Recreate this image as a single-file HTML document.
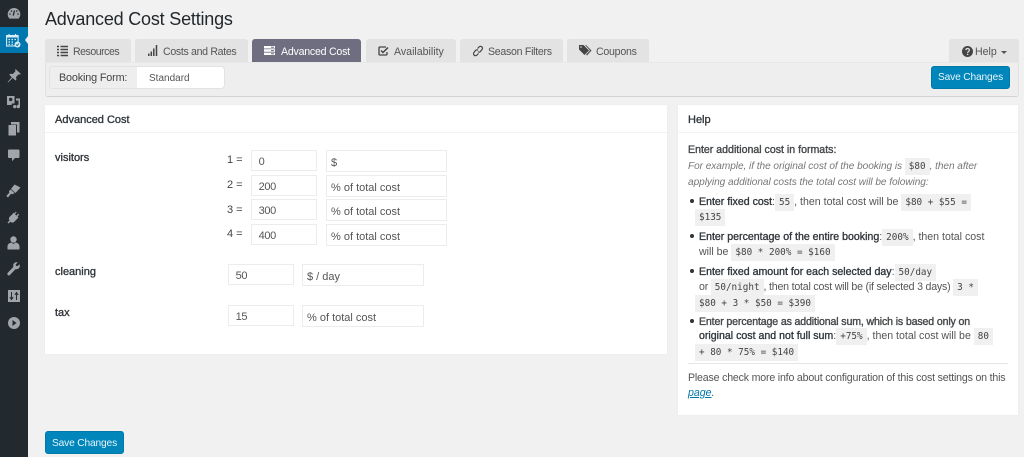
<!DOCTYPE html>
<html><head><meta charset="utf-8"><style>
html,body{margin:0;padding:0;width:1024px;height:457px;overflow:hidden;background:#f1f1f1;font-family:"Liberation Sans",sans-serif;color:#555;font-size:11px}
.a{position:absolute}
.t{position:absolute;white-space:nowrap;line-height:16px}
#side{left:0;top:0;width:28px;height:457px;background:#22292f}
#act{left:0;top:27px;width:28px;height:26px;background:#0077ae}
#arr{left:25px;top:36px;width:0;height:0;border:4px solid transparent;border-left:0;border-right:3px solid #f1f1f1}
svg{position:absolute;overflow:visible}
.tab{position:absolute;top:39px;height:23px;background:#e3e3e3;border-radius:3px 3px 0 0;box-sizing:border-box;line-height:26px;color:#555;font-size:10.6px;white-space:nowrap}
.tab span{position:absolute;top:0}
.tab.on{background:#6e6e80;color:#fff}
.panel{position:absolute;background:#fff;box-shadow:0 0 1px rgba(0,0,0,.06)}
.btn{position:absolute;background:#0086bb;color:#e8f5fa;border-radius:3px;text-align:center;font-size:10.2px;letter-spacing:-.15px;box-sizing:border-box;border:1px solid #0079a8}
.i{position:absolute;background:#fff;border:1px solid #ececec;box-sizing:border-box;height:21px;line-height:22px;padding-left:4px;font-size:11px;color:#555}
.n{letter-spacing:-.4px}
.s{height:22px;line-height:24px;padding-left:4px}
.l{position:absolute;font-size:11px;line-height:16px;color:#444;white-space:nowrap}
.b{color:#32373c;font-weight:normal;-webkit-text-stroke:.35px #32373c}
code{font-family:"DejaVu Sans Mono",monospace;font-size:9.3px;background:#f0f0f0;padding:3px 4px;color:#444;-webkit-text-stroke:0;letter-spacing:0}
.h{font-size:10.6px;color:#555;line-height:18px}
.it{font-size:10.1px;font-style:italic;color:#777;letter-spacing:-.05px}
.bu{position:absolute;left:690px;width:4px;height:4px;border-radius:50%;background:#333}
</style></head><body>
<div class="a" id="side"></div>
<div class="a" id="act"></div>
<div class="a" id="arr"></div>

<svg style="left:7px;top:7px" width="14" height="13" viewBox="0 0 14 13"><path d="M7 1a6.300 6.300 0 0 0-6.300 6.300c0 1.700.6 3.200 1.700 4.300h9.200a6.300 6.300 0 0 0 1.700-4.300A6.300 6.300 0 0 0 7 1z" fill="#a0a5a9"/><path d="M7.500 3.500L6.200 8.600" stroke="#22292f" stroke-width="1.300"/><circle cx="3" cy="7" r=".8" fill="#22292f"/><circle cx="11" cy="7" r=".8" fill="#22292f"/><circle cx="4.500" cy="4" r=".8" fill="#22292f"/><circle cx="9.800" cy="4" r=".8" fill="#22292f"/></svg>
<svg style="left:6px;top:34px" width="15" height="14" viewBox="0 0 15 14"><rect x=".6" y="1.500" width="11.500" height="10.500" fill="none" stroke="#d8ecf4" stroke-width="1.100"/><rect x=".6" y="1" width="11.500" height="2.500" fill="#d8ecf4"/><path d="M3 0v2M9.500 0v2" stroke="#d8ecf4" stroke-width="1.200"/><path d="M2.500 5.500h1.500M5.500 5.500H7M8.500 5.500H10M2.500 8h1.500M5.500 8H7M2.500 10.300h1.500M5.500 10.300H7" stroke="#d8ecf4" stroke-width="1.200"/><circle cx="11.500" cy="10.500" r="3" fill="#d8ecf4"/><path d="M10 10.500l1.200 1.100 1.800-2" stroke="#0077ae" fill="none"/></svg>
<svg style="left:7px;top:69px" width="14" height="14" viewBox="0 0 14 14"><path d="M8.500 0l5.500 5-1.200.5-1-.3-2.700 2.700.3 2.600-1 1-2.600-2.600L1 13.500l-.4-.4 4.200-4.900-2.500-2.500 1-1 2.500.3L8.500 2.300 8.100 1.200z" fill="#a0a5a9"/></svg>
<svg style="left:6px;top:95px" width="15" height="14" viewBox="0 0 15 14"><path d="M1 1h7.500v7.500H5.800L5.500 10H1z" fill="#a0a5a9"/><circle cx="4.700" cy="4.500" r="1.700" fill="#22292f"/><path d="M10 3.500h4v8a1.700 1.700 0 1 1-1.500-1.700V5.500H10zM8.700 10a1.600 1.600 0 1 1 0 3.200 1.600 1.600 0 0 1 0-3.200z" fill="#a0a5a9"/></svg>
<svg style="left:8px;top:122px" width="12" height="14" viewBox="0 0 12 14"><path d="M3 0h8.500v10.500H9V2.500H3z" fill="#a0a5a9"/><rect x=".5" y="3" width="7.500" height="10.500" fill="#a0a5a9"/></svg>
<svg style="left:8px;top:149px" width="12" height="13" viewBox="0 0 12 13"><path d="M1 .5h9.500a1 1 0 0 1 1 1v6.500a1 1 0 0 1-1 1H7l-3 3.300V9H1a1 1 0 0 1-1-1V1.500a1 1 0 0 1 1-1z" fill="#a0a5a9"/></svg>
<svg style="left:6px;top:184px" width="15" height="14" viewBox="0 0 15 14"><path d="M8.500 .5l6 3-5 5.500-4.500-4zM4.500 5.500l4 3.500-2 1.300-1.500-.6-3 3.800-1.700-1.500 3-3.200-.3-1.500z" fill="#a0a5a9"/></svg>
<svg style="left:7px;top:211px" width="13" height="13" viewBox="0 0 13 13"><path d="M8.500 .5l1.200.8-1.700 2 1.500 1.300 1.700-2 1 .9-1.700 2.100 1 .9-4.700 4.700c-1.500.7-2.600.3-3.500-.5L1.500 12.500.5 11.500l2-2c-.7-1-.8-2.100-.2-3.300L7 1.500l1 .9z" fill="#a0a5a9"/></svg>
<svg style="left:7px;top:236px" width="13" height="14" viewBox="0 0 13 14"><circle cx="6.500" cy="3.500" r="3.200" fill="#a0a5a9"/><path d="M4.500 6.500L6.500 8l2-1.500c2.500.5 4 1.700 4 4v3H.5v-3c0-2.300 1.500-3.500 4-4z" fill="#a0a5a9"/></svg>
<svg style="left:7px;top:262px" width="13" height="14" viewBox="0 0 13 14"><path d="M12.500 2.200L10.300 4.300 9 3.800l-.4-1.300L10.800.5C9.400 0 7.900.3 7 1.400 6.100 2.400 6 3.700 6.400 4.900L.8 10.800c-.6.700-.6 1.600 0 2.200.6.600 1.500.600 2.100 0l5.700-5.900c1.200.3 2.500 0 3.400-1 .9-1 1.100-2.600.5-3.900z" fill="#a0a5a9"/></svg>
<svg style="left:8px;top:290px" width="12" height="12" viewBox="0 0 12 12"><rect width="12" height="12" fill="#a0a5a9"/><path d="M3.500 2v7M1.800 7l1.700 2.500L5.200 7M8.500 10V3M6.800 5l1.700-2.500L10.200 5" stroke="#22292f" stroke-width="1" fill="none"/></svg>
<svg style="left:8px;top:317px" width="12" height="12" viewBox="0 0 12 12"><circle cx="6" cy="6" r="6" fill="#a0a5a9"/><path d="M4.500 3l4 3-4 3z" fill="#22292f"/></svg>

<div class="t" style="left:45px;top:7px;font-size:18px;line-height:24px;color:#23282d;letter-spacing:-.2px">Advanced Cost Settings</div>

<div class="tab" style="left:45px;width:86px"><svg style="left:12px;top:7px" width="11" height="10" viewBox="0 0 11 10"><path d="M0 .5h2M3.500 .5H11M0 3.500h2M3.500 3.500H11M0 6.500h2M3.500 6.500H11M0 9.500h2M3.500 9.500H11" stroke="#444" stroke-width="1.500"/></svg><span style="left:28px;letter-spacing:-.5px">Resources</span></div>
<div class="tab" style="left:135px;width:113px"><svg style="left:13px;top:6px" width="10" height="11" viewBox="0 0 10 11"><path d="M.8 8.500V11M3.300 6.500V11M5.800 3.500V11M8.500 0V11" stroke="#444" stroke-width="1.500"/></svg><span style="left:28px;letter-spacing:-.33px">Costs and Rates</span></div>
<div class="tab on" style="left:252px;width:109px"><svg style="left:12px;top:7px" width="11" height="9" viewBox="0 0 11 9"><path d="M0 0h11v2.500H0zM0 3.300h11v2.500H0zM0 6.600h11V9H0z" fill="#fff"/><path d="M7 1.300h3M7 4.600h3M7 7.800h3" stroke="#6e6e80"/></svg><span style="left:29px;letter-spacing:-.23px">Advanced Cost</span></div>
<div class="tab" style="left:366px;width:90px"><svg style="left:12px;top:7px" width="11" height="10" viewBox="0 0 11 10"><path d="M8 1H2a1 1 0 0 0-1 1v6a1 1 0 0 0 1 1h6a1 1 0 0 0 1-1V6" fill="none" stroke="#444" stroke-width="1.300"/><path d="M3 4.500l2 2 5-5" fill="none" stroke="#444" stroke-width="1.500"/></svg><span style="left:28px">Availability</span></div>
<div class="tab" style="left:460px;width:103px"><svg style="left:13px;top:7px" width="10" height="10" viewBox="0 0 10 10"><path d="M4.500 2.500L6 1a1.900 1.900 0 0 1 3 2.500L7.500 5.500a1.900 1.900 0 0 1-2.500.2M5.500 7.500L4 9A1.900 1.900 0 0 1 1 6.500l1.500-2a1.900 1.900 0 0 1 2.500-.2" fill="none" stroke="#444" stroke-width="1.200"/></svg><span style="left:28px;letter-spacing:-.28px">Season Filters</span></div>
<div class="tab" style="left:567px;width:82px"><svg style="left:12px;top:6px" width="13" height="11" viewBox="0 0 13 11"><path d="M0 0h4.500l5.500 5.500-4.500 4.500L0 4.500z" fill="#444"/><path d="M6 0h1l5.500 5.500L8 10.500l-1-.7 4-4.300z" fill="#444"/><circle cx="2" cy="2" r=".8" fill="#e3e3e3"/></svg><span style="left:29px;letter-spacing:-.25px">Coupons</span></div>
<div class="tab" style="left:949px;width:70px"><svg style="left:13px;top:7px" width="11" height="11" viewBox="0 0 10 10"><circle cx="5" cy="5" r="5" fill="#444"/><path d="M3.500 3.800c0-2 3.200-2 3.200 0 0 1.300-1.600 1.200-1.600 2.400" fill="none" stroke="#e3e3e3" stroke-width="1.100"/><rect x="4.500" y="7" width="1.200" height="1.200" fill="#e3e3e3"/></svg><span style="left:26px">Help</span><span style="left:52px;top:12px;width:0;height:0;border:3px solid transparent;border-top-color:#555;border-bottom:0"></span></div>

<div class="a" style="left:45px;top:62px;width:974px;height:35px;background:#eee;border:1px solid #e2e2e2;border-bottom-color:#d2d2d2;border-top-color:#e8e8e8;border-radius:0 0 3px 3px;box-sizing:border-box"></div>
<div class="a" style="left:49px;top:66px;width:176px;height:23px;background:#fff;border:1px solid #e2e2e2;border-radius:4px;box-sizing:border-box;overflow:hidden"><div class="a" style="left:0;top:0;width:87px;height:21px;background:#eee"></div></div>
<div class="t" style="left:59px;top:70px;font-size:10.8px;color:#444;letter-spacing:-.15px">Booking Form:</div>
<div class="t" style="left:149px;top:71px;font-size:10px;color:#555">Standard</div>
<div class="btn" style="left:931px;top:66px;width:79px;height:23px;line-height:22px">Save Changes</div>

<div class="panel" style="left:45px;top:105px;width:622px;height:249px"></div>
<div class="a" style="left:45px;top:132px;width:622px;height:1px;background:#f3f3f3"></div>
<div class="t b" style="left:55px;top:112px;font-size:11px">Advanced Cost</div>

<div class="l b" style="left:55px;top:150px">visitors</div>
<div class="l b" style="left:55px;top:264px">cleaning</div>
<div class="l b" style="left:55px;top:305px">tax</div>

<div class="l" style="left:227px;top:152px">1 =</div>
<div class="i" style="left:251px;top:150px;width:66px"><span class="n">&nbsp;0</span></div><div class="i s" style="left:326px;top:150px;width:121px">$</div>
<div class="l" style="left:227px;top:177px">2 =</div>
<div class="i" style="left:251px;top:175px;width:66px"><span class="n">&nbsp;200</span></div><div class="i s" style="left:326px;top:175px;width:121px">% of total cost</div>
<div class="l" style="left:227px;top:202px">3 =</div>
<div class="i" style="left:251px;top:199px;width:66px"><span class="n">&nbsp;300</span></div><div class="i s" style="left:326px;top:199px;width:121px">% of total cost</div>
<div class="l" style="left:227px;top:226px">4 =</div>
<div class="i" style="left:251px;top:224px;width:66px"><span class="n">&nbsp;400</span></div><div class="i s" style="left:326px;top:224px;width:121px">% of total cost</div>
<div class="i" style="left:228px;top:264px;width:66px"><span class="n">&nbsp;50</span></div><div class="i s" style="left:302px;top:264px;width:122px">$ / day</div>
<div class="i" style="left:228px;top:305px;width:66px"><span class="n">&nbsp;15</span></div><div class="i s" style="left:302px;top:305px;width:122px">% of total cost</div>

<div class="panel" style="left:678px;top:105px;width:340px;height:310px"></div>
<div class="a" style="left:678px;top:132px;width:340px;height:1px;background:#f3f3f3"></div>
<div class="t b" style="left:688px;top:112px;font-size:11px">Help</div>

<div class="t h b" style="left:688px;top:141px">Enter additional cost in formats:</div>
<div class="t h it" style="left:688px;top:158px">For example, if the original cost of the booking is <code style="font-style:normal">$80</code>, then after</div>
<div class="t h it" style="left:688px;top:174px">applying additional costs the total cost will be folowing:</div>

<div class="bu" style="top:199px"></div>
<div class="t h" style="left:699px;top:193px"><span class="b">Enter fixed cost</span>:<code>55</code>, then total cost will be <code>$80 + $55 =</code></div>
<div class="t h" style="left:699px;top:208px"><code style="margin-left:-4px">$135</code></div>

<div class="bu" style="top:234px"></div>
<div class="t h" style="left:699px;top:228px"><span class="b">Enter percentage of the entire booking</span>:<code>200%</code>, then total cost</div>
<div class="t h" style="left:699px;top:243px">will be <code>$80 * 200% = $160</code></div>

<div class="bu" style="top:269px"></div>
<div class="t h" style="left:699px;top:263px"><span class="b">Enter fixed amount for each selected day</span>:<code>50/day</code></div>
<div class="t h" style="left:699px;top:278px;letter-spacing:-.2px">or <code>50/night</code>, then total cost will be (if selected 3 days) <code>3 *</code></div>
<div class="t h" style="left:699px;top:294px"><code style="margin-left:-4px">$80 + 3 * $50 = $390</code></div>

<div class="bu" style="top:319px"></div>
<div class="t h b" style="left:699px;top:313px;letter-spacing:-.14px">Enter percentage as additional sum, which is based only on</div>
<div class="t h" style="left:699px;top:327px"><span class="b">original cost and not full sum</span>:<code>+75%</code>, then total cost will be <code>80</code></div>
<div class="t h" style="left:699px;top:343px"><code style="margin-left:-4px">+ 80 * 75% = $140</code></div>

<div class="a" style="left:688px;top:363px;width:320px;height:1px;background:#e5e5e5"></div>
<div class="t h" style="left:688px;top:369px;letter-spacing:-.18px">Please check more info about configuration of this cost settings on this</div>
<div class="t h" style="left:688px;top:384px;font-style:italic"><span style="color:#0073aa;text-decoration:underline">page</span>.</div>

<div class="btn" style="left:45px;top:431px;width:79px;height:23px;line-height:23px">Save Changes</div>
</body></html>
